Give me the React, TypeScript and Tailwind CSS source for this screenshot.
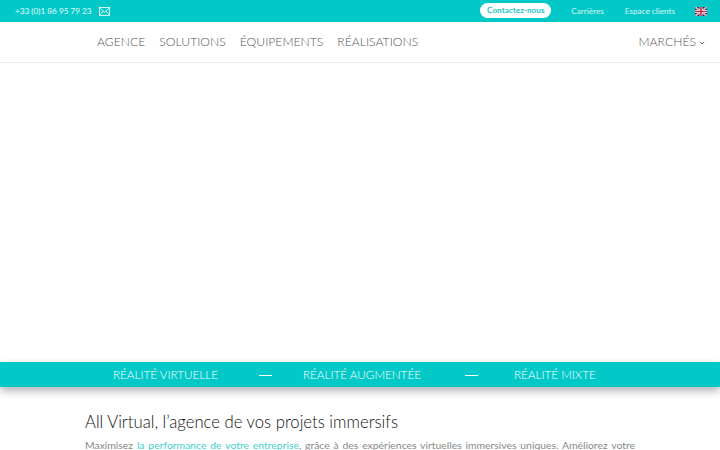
export default function App() {
  const font = { fontFamily: 'Lato, "Noto Sans", sans-serif' };
  return (
    <div style={font} className="h-[450px] w-[720px] overflow-hidden bg-white flex flex-col">
      <div className="h-[22px] shrink-0 bg-[#02c9c8] flex items-center text-white text-[8.2px]">
        <span className="ml-[15px] text-[8.2px] text-white/90">+33 (0)1 86 95 79 23</span>
        <svg className="ml-[7px]" width="11" height="9" viewBox="0 0 11 9" fill="none" stroke="white" strokeWidth="0.8">
          <rect x="0.5" y="0.5" width="10" height="8" />
          <path d="M0.5 0.8 L5.5 5 L10.5 0.8 M0.5 8.2 L4 4 M10.5 8.2 L7 4" />
        </svg>
        <div className="ml-auto flex items-center">
          <span className="h-[15px] mb-[1px] w-[71px] rounded-full bg-white text-[#1cc7c6] font-bold flex items-center justify-center">Contactez-nous</span>
          <span className="ml-[20px] text-white/80">Carrières</span>
          <span className="ml-[21px] text-white/80">Espace clients</span>
          <svg className="ml-[20px] mr-[13px]" width="12" height="9" viewBox="0 0 60 45">
            <rect width="60" height="45" fill="#1f2a60" />
            <path d="M0 0 L60 45 M60 0 L0 45" stroke="white" strokeWidth="9" />
            <path d="M0 0 L60 45 M60 0 L0 45" stroke="#c8283c" strokeWidth="3" />
            <path d="M30 0 V45 M0 22.5 H60" stroke="white" strokeWidth="14" />
            <path d="M30 0 V45 M0 22.5 H60" stroke="#c8283c" strokeWidth="8" />
          </svg>
        </div>
      </div>
      <div className="h-[41px] shrink-0 border-b border-[#eeeeee] flex items-center text-[12.2px] font-light text-[#555555] pl-[97px] pr-[15px]">
        <span>AGENCE</span>
        <span className="ml-[14px]">SOLUTIONS</span>
        <span className="ml-[14px]">ÉQUIPEMENTS</span>
        <span className="ml-[14px]">RÉALISATIONS</span>
        <span className="ml-auto">MARCHÉS</span>
        <svg className="ml-[3px] mt-[1px]" width="6" height="4" viewBox="0 0 6 4" fill="none" stroke="#777777" strokeWidth="1">
          <path d="M0.8 0.8 L3 3 L5.2 0.8" />
        </svg>
      </div>
      <div className="h-[299px] shrink-0" />
      <div className="h-[25px] shrink-0 bg-[#02c9c8] shadow-[0_4px_8px_rgba(0,0,0,0.3)] flex items-center text-white text-[11.7px] font-light whitespace-nowrap pt-[1px]">
        <span className="ml-[113px] w-[107px]">RÉALITÉ VIRTUELLE</span>
        <span className="ml-[39px] h-[1px] w-[13px] bg-white" />
        <span className="ml-[31px] w-[118px]">RÉALITÉ AUGMENTÉE</span>
        <span className="ml-[44px] h-[1px] w-[13px] bg-white" />
        <span className="ml-[36px]">RÉALITÉ MIXTE</span>
      </div>
      <div className="px-[85px] pt-[25px]">
        <h1 className="text-[16.7px] leading-[20px] font-light text-[#111111]">All Virtual, l’agence de vos projets immersifs</h1>
        <p className="mt-[4px] text-[10.4px] leading-[18px] text-[#888888] text-justify">
          Maximisez <span className="text-[#3fcfce]">la performance de votre entreprise</span>, grâce à des expériences virtuelles immersives uniques. Améliorez votre communication
        </p>
      </div>
    </div>
  );
}
